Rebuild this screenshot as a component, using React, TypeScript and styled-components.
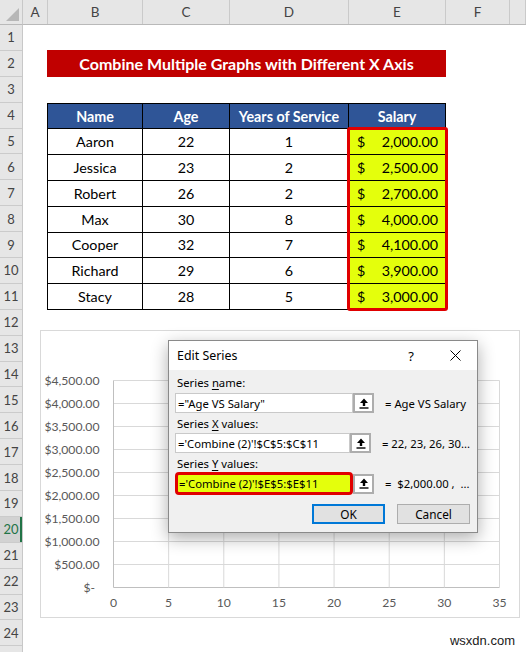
import React from "react";
import styled, { createGlobalStyle, css } from "styled-components";

const GlobalStyle = createGlobalStyle`
  html, body {
    margin: 0;
    padding: 0;
    background: #ffffff;
  }
  body {
    width: 526px;
    height: 652px;
    overflow: hidden;
  }
`;

const COL_WIDTHS = [25, 95, 87, 119, 97, 64];
const COL_LETTERS = ["A", "B", "C", "D", "E", "F"];
const ROW_H = 25.9;
const ROW_COUNT = 24;
const ACTIVE_ROW = 20;

const people = [
  { name: "Aaron", age: 22, years: 1, salary: 2000 },
  { name: "Jessica", age: 23, years: 2, salary: 2500 },
  { name: "Robert", age: 26, years: 2, salary: 2700 },
  { name: "Max", age: 30, years: 8, salary: 4000 },
  { name: "Cooper", age: 32, years: 7, salary: 4100 },
  { name: "Richard", age: 29, years: 6, salary: 3900 },
  { name: "Stacy", age: 28, years: 5, salary: 3000 },
];

const money = (v: number) =>
  v.toLocaleString("en-US", { minimumFractionDigits: 2, maximumFractionDigits: 2 });

const Sheet = styled.div`
  position: relative;
  width: 526px;
  height: 652px;
  overflow: hidden;
  display: grid;
  grid-template-columns: 23px 1fr;
  grid-template-rows: 25px 1fr;
  font-family: Lato, "Liberation Sans", sans-serif;
  color: #000;
`;

const Corner = styled.div`
  position: relative;
  background: #e6e6e6;
  border-right: 1px solid #c8c8c8;
  border-bottom: 1px solid #b9b9b9;
  box-sizing: border-box;
  &::after {
    content: "";
    position: absolute;
    right: 3px;
    bottom: 3px;
    border-style: solid;
    border-width: 0 0 13px 13px;
    border-color: transparent transparent #b7b7b7 transparent;
  }
`;

const ColumnBar = styled.div`
  display: flex;
  background: #e6e6e6;
  border-bottom: 1px solid #b9b9b9;
  box-sizing: border-box;
`;

const ColumnCell = styled.div<{ $w?: number }>`
  flex: ${({ $w }) => ($w ? `0 0 ${$w}px` : "1")};
  box-sizing: border-box;
  border-right: 1px solid #cacaca;
  display: flex;
  align-items: center;
  justify-content: center;
  font-size: 13.5px;
  color: #444;
`;

const RowBar = styled.div`
  display: flex;
  flex-direction: column;
  background: #e6e6e6;
  border-right: 1px solid #c8c8c8;
  box-sizing: border-box;
`;

const RowCell = styled.div<{ $active?: boolean }>`
  flex: 0 0 ${ROW_H}px;
  box-sizing: border-box;
  border-bottom: 1px solid #cbcbcb;
  display: flex;
  align-items: center;
  justify-content: center;
  font-size: 13px;
  color: #444;
  ${({ $active }) =>
    $active &&
    css`
      background: #d2d2d2;
      color: #217346;
      box-shadow: inset -2px 0 0 #217346;
    `}
`;

const Cells = styled.div`
  display: grid;
  grid-template-columns: ${COL_WIDTHS.map((w) => `${w}px`).join(" ")} 1fr;
  grid-auto-rows: ${ROW_H}px;
  align-content: start;
`;

const Title = styled.div`
  grid-column: 2 / 6;
  grid-row: 2;
  margin: -1px 0 0 -1px;
  background: #c00000;
  color: #fff;
  font-weight: 700;
  font-size: 16px;
  display: flex;
  align-items: center;
  justify-content: center;
`;

const Table = styled.div`
  grid-column: 2 / 6;
  grid-row: 4 / 12;
  display: grid;
  grid-template-columns: 94px 86px 118px 1fr;
  grid-auto-rows: 1fr;
  gap: 1px;
  padding: 1px;
  margin: 0 0 0 -1px;
  background: #000;
`;

const HeadCell = styled.div`
  background: #2f5597;
  color: #fff;
  font-weight: 700;
  font-size: 14.3px;
  display: flex;
  align-items: center;
  justify-content: center;
`;

const Cell = styled.div`
  background: #fff;
  font-size: 14.3px;
  display: flex;
  align-items: center;
  justify-content: center;
`;

const MoneyCell = styled(Cell)`
  background: #e4ff0c;
  justify-content: space-between;
  padding: 0 7px 0 8px;
`;

const SalaryRange = styled.div`
  grid-column: 5;
  grid-row: 5 / 12;
  position: relative;
  z-index: 1;
  margin: -2px -2px -1px -2px;
  border: 3px solid #e00000;
  border-radius: 3px;
  pointer-events: none;
`;

const ChartBox = styled.div`
  position: absolute;
  left: 40px;
  top: 330px;
  width: 480px;
  height: 288px;
  box-sizing: border-box;
  border: 1px solid #d9d9d9;
  background: #fff;
`;

const Dialog = styled.div`
  position: absolute;
  left: 168px;
  top: 340px;
  width: 310px;
  height: 193px;
  box-sizing: border-box;
  border: 1px solid #8a8a8a;
  background: #f0f0f0;
  box-shadow: 0 5px 16px rgba(0, 0, 0, 0.32);
  display: flex;
  flex-direction: column;
  font-family: "Noto Sans", "Open Sans", sans-serif;
  font-size: 11.3px;
  color: #000;
`;

const DialogTitle = styled.div`
  flex: 0 0 29px;
  background: #fff;
  display: flex;
  align-items: center;
  padding-left: 8px;
  font-size: 12.4px;
`;

const TitleSpacer = styled.div`
  flex: 1;
`;

const TitleButton = styled.div`
  width: 44px;
  height: 29px;
  display: flex;
  align-items: center;
  justify-content: center;
  font-size: 13px;
`;

const DialogBody = styled.div`
  flex: 1;
  display: flex;
  flex-direction: column;
  padding: 6px 7px 8px 6px;
`;

const FieldLabel = styled.div<{ $gap: number }>`
  line-height: 14px;
  margin-bottom: ${({ $gap }) => $gap}px;
  padding-left: 2px;
  u {
    text-decoration-thickness: 1px;
    text-underline-offset: 2px;
  }
`;

const FieldRow = styled.div`
  display: flex;
  align-items: center;
  margin-bottom: 4px;
`;

const RefInput = styled.div<{ $marked?: boolean }>`
  width: 178px;
  height: 20px;
  box-sizing: border-box;
  background: #fff;
  border: 1px solid #c9c9c9;
  display: flex;
  align-items: center;
  padding-left: 2px;
  white-space: nowrap;
  ${({ $marked }) =>
    $marked &&
    css`
      height: 23px;
      background: #e4ff0c;
      border: 3px solid #e00000;
      border-radius: 4px;
      padding-left: 1px;
    `}
`;

const RefButton = styled.div`
  width: 21px;
  height: 20px;
  box-sizing: border-box;
  border: 2px solid #adadad;
  background: #fff;
  display: flex;
  align-items: center;
  justify-content: center;
`;

const RefValue = styled.div`
  margin-left: 11px;
  white-space: nowrap;
`;

const ButtonRow = styled.div`
  display: flex;
  justify-content: flex-end;
  gap: 12px;
  margin-top: 5px;
`;

const DialogButton = styled.div<{ $primary?: boolean }>`
  width: 73px;
  height: 20px;
  box-sizing: border-box;
  background: #e1e1e1;
  border: 1px solid #adadad;
  display: flex;
  align-items: center;
  justify-content: center;
  font-size: 11.8px;
  ${({ $primary }) =>
    $primary &&
    css`
      border: 2px solid #0078d7;
    `}
`;

const Watermark = styled.div`
  position: absolute;
  right: 11px;
  bottom: 4px;
  font-family: "Liberation Sans", Arial, sans-serif;
  font-size: 13px;
  color: #1a1a1a;
`;

const UpArrow = () => (
  <svg width="10" height="11" viewBox="0 0 10 11">
    <path d="M5 0.5 L9 5 L6.2 5 L6.2 8 L3.8 8 L3.8 5 L1 5 Z" fill="#000" />
    <rect x="0.5" y="9.3" width="9" height="1.4" fill="#000" />
  </svg>
);

const CloseIcon = () => (
  <svg width="11" height="11" viewBox="0 0 11 11">
    <path d="M0.5 0.5 L10.5 10.5 M10.5 0.5 L0.5 10.5" stroke="#000" strokeWidth="1" />
  </svg>
);

// plot area inside the chart box
const PLOT = { x: 72.5, y: 49.5, w: 386, h: 207 };
const Y_TICKS = [4500, 4000, 3500, 3000, 2500, 2000, 1500, 1000, 500, 0];
const X_TICKS = [0, 5, 10, 15, 20, 25, 30, 35];

function Chart() {
  const yStep = PLOT.h / (Y_TICKS.length - 1);
  const xStep = PLOT.w / (X_TICKS.length - 1);
  return (
    <ChartBox>
      <svg width="478" height="286" style={{ display: "block" }}>
        {Y_TICKS.map((v, i) => {
          const y = PLOT.y + i * yStep;
          return (
            <g key={`y${v}`}>
              <line
                x1={PLOT.x}
                x2={PLOT.x + PLOT.w}
                y1={y}
                y2={y}
                stroke={v === 0 ? "#bfbfbf" : "#d9d9d9"}
              />
              <text
                x={v === 0 ? 54 : 58.5}
                y={y + 4.5}
                textAnchor="end"
                fontFamily="Lato, 'Liberation Sans', sans-serif"
                fontSize="12.2"
                fill="#595959"
              >
                {v === 0 ? "$-" : `$${money(v)}`}
              </text>
            </g>
          );
        })}
        {X_TICKS.map((v, i) => {
          const x = PLOT.x + i * xStep;
          return (
            <g key={`x${v}`}>
              <line
                x1={x}
                x2={x}
                y1={PLOT.y}
                y2={PLOT.y + PLOT.h}
                stroke={i === 0 ? "#bfbfbf" : "#d9d9d9"}
              />
              <text
                x={x}
                y={276}
                textAnchor="middle"
                fontFamily="Lato, 'Liberation Sans', sans-serif"
                fontSize="12.2"
                fill="#595959"
              >
                {v}
              </text>
            </g>
          );
        })}
      </svg>
    </ChartBox>
  );
}

function EditSeries() {
  return (
    <Dialog>
      <DialogTitle>
        Edit Series
        <TitleSpacer />
        <TitleButton>?</TitleButton>
        <TitleButton>
          <CloseIcon />
        </TitleButton>
      </DialogTitle>
      <DialogBody>
        <FieldLabel $gap={3}>
          Series <u>n</u>ame:
        </FieldLabel>
        <FieldRow>
          <RefInput>="Age VS Salary"</RefInput>
          <RefButton>
            <UpArrow />
          </RefButton>
          <RefValue>= Age VS Salary</RefValue>
        </FieldRow>
        <FieldLabel $gap={2}>
          Series <u>X</u> values:
        </FieldLabel>
        <FieldRow>
          <RefInput>='Combine (2)'!$C$5:$C$11</RefInput>
          <RefButton>
            <UpArrow />
          </RefButton>
          <RefValue>= 22, 23, 26, 30...</RefValue>
        </FieldRow>
        <FieldLabel $gap={1}>
          Series <u>Y</u> values:
        </FieldLabel>
        <FieldRow>
          <RefInput $marked>='Combine (2)'!$E$5:$E$11</RefInput>
          <RefButton>
            <UpArrow />
          </RefButton>
          <RefValue>=&nbsp;&nbsp;$2,000.00 ,&nbsp;&nbsp;...</RefValue>
        </FieldRow>
        <ButtonRow>
          <DialogButton $primary>OK</DialogButton>
          <DialogButton>Cancel</DialogButton>
        </ButtonRow>
      </DialogBody>
    </Dialog>
  );
}

export default function App() {
  return (
    <>
      <GlobalStyle />
      <Sheet>
        <Corner />
        <ColumnBar>
          {COL_LETTERS.map((l, i) => (
            <ColumnCell key={l} $w={COL_WIDTHS[i]}>
              {l}
            </ColumnCell>
          ))}
          <ColumnCell />
        </ColumnBar>
        <RowBar>
          {Array.from({ length: ROW_COUNT }, (_, i) => (
            <RowCell key={i} $active={i + 1 === ACTIVE_ROW}>
              {i + 1}
            </RowCell>
          ))}
        </RowBar>
        <Cells>
          <Title>Combine Multiple Graphs with Different X Axis</Title>
          <Table>
            <HeadCell>Name</HeadCell>
            <HeadCell>Age</HeadCell>
            <HeadCell>Years of Service</HeadCell>
            <HeadCell>Salary</HeadCell>
            {people.map((p) => (
              <React.Fragment key={p.name}>
                <Cell>{p.name}</Cell>
                <Cell>{p.age}</Cell>
                <Cell>{p.years}</Cell>
                <MoneyCell>
                  <span>$</span>
                  <span>{money(p.salary)}</span>
                </MoneyCell>
              </React.Fragment>
            ))}
          </Table>
          <SalaryRange />
        </Cells>
        <Chart />
        <EditSeries />
        <Watermark>wsxdn.com</Watermark>
      </Sheet>
    </>
  );
}
